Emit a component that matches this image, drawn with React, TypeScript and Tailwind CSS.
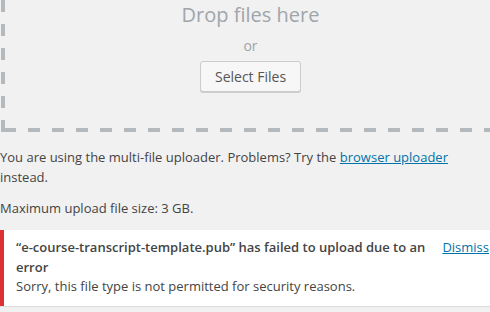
import React from 'react';

const App = () => {
  return (
    <div className="w-[490px] h-[312px] overflow-hidden bg-[#f1f1f1] font-['Open_Sans',sans-serif] text-[13px] text-[#444]">
      <div className="w-[500px]">
        {/* Drag & drop area, top scrolled out of view; dashed edges drawn as repeating gradients */}
        <div className="ml-px -mt-[70px] h-[202px] pt-[71px] flex flex-col items-center [background:repeating-linear-gradient(to_top,#b4b9be_0_12px,transparent_12px_24px)_left_bottom/4px_100%_no-repeat,repeating-linear-gradient(to_right,#b4b9be_0_12px,transparent_12px_24px)_3px_bottom/100%_4px_no-repeat]">
          <p className="text-[20px] leading-[28px] text-[#a0a5aa]">Drop files here</p>
          <p className="mt-[6px] text-[14px] leading-[21px] text-[#a0a5aa]">or</p>
          <button className="mt-[5px] w-[101px] h-[31px] flex items-center justify-center rounded-[3px] border border-[#ccc] bg-[#f7f7f7] text-[14px] text-[#555] shadow-[0_1px_0_#ccc]">
            Select Files
          </button>
        </div>

        <p className="mt-[16px] leading-[19.5px] w-[490px]">
          You are using the multi-file uploader. Problems? Try the{' '}
          <a href="#" className="text-[#0073aa] underline">browser uploader</a> instead.
        </p>
        <p className="mt-[12px] leading-[19.5px]">Maximum upload file size: 3 GB.</p>

        {/* Upload error notice */}
        <div className="mt-[11.5px] bg-white border-l-4 border-[#dc3232] pl-3 pr-[11px] pt-[8px] pb-[10px] shadow-[0_1px_1px_rgba(0,0,0,0.08)]">
          <div className="flex gap-[10px]">
            <strong className="flex-1 font-semibold leading-[19.5px]">
              “e-course-transcript-template.pub” has failed to upload due to an error
            </strong>
            <a href="#" className="text-[#0073aa] underline leading-[19.5px]">Dismiss</a>
          </div>
          <p className="leading-[18.5px]">Sorry, this file type is not permitted for security reasons.</p>
        </div>
      </div>
    </div>
  );
};

export default App;
